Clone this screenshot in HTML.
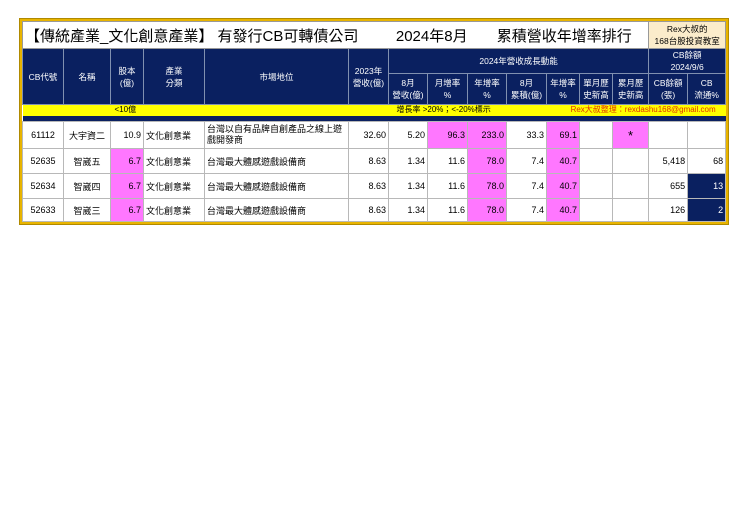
<!DOCTYPE html>
<html><head><meta charset="utf-8"><style>
body{margin:0;background:#fff;width:740px;height:523px;position:relative;font-family:"Liberation Sans","Noto Sans CJK TC",sans-serif;}
.wrap{position:absolute;left:20px;top:19px;border:2px solid #e8b400;box-shadow:0 0 0 1px #b08a00;}
table{border-collapse:collapse;table-layout:fixed;width:703px;}
td{padding:0 2px;font-size:8.5px;overflow:hidden;white-space:nowrap;box-sizing:border-box;}
.h td{background:#0a2060;color:#fff;text-align:center;border:1px solid #8090b0;line-height:12px}
.d td{background:#fff;color:#000;border:1px solid #b8b8b8;text-align:right;font-size:9px}
.d td.c{text-align:center}.d td.l{text-align:left}
.p{background:#ff77ff!important}
.n{background:#0a2060!important;color:#fff!important}
.y td{font-size:8px;line-height:10px;padding:0}
</style></head><body>
<div class="wrap"><table>
<colgroup><col style="width:41px"><col style="width:47px"><col style="width:33px"><col style="width:61px"><col style="width:144px"><col style="width:40px"><col style="width:39px"><col style="width:40px"><col style="width:39px"><col style="width:40px"><col style="width:33px"><col style="width:33px"><col style="width:36px"><col style="width:39px"><col style="width:38px"></colgroup>
<tr style="height:27px"><td colspan="13" style="font-size:15px;background:#fff;border:1px solid #999;padding-left:2px">【傳統產業_文化創意產業】 有發行CB可轉債公司 &nbsp; &nbsp; &nbsp; &nbsp; 2024年8月 &nbsp; &nbsp; &nbsp; 累積營收年增率排行</td><td colspan="2" style="background:#fbeccb;text-align:center;font-size:8.5px;line-height:12px;border:1px solid #999">Rex大叔的<br>168台股投資教室</td></tr>
<tr class="h" style="height:22px"><td rowspan="2">CB代號</td><td rowspan="2">名稱</td><td rowspan="2">股本<br>(億)</td><td rowspan="2">產業<br>分類</td><td rowspan="2">市場地位</td><td rowspan="2">2023年<br>營收(億)</td><td colspan="7">2024年營收成長動能</td><td colspan="2">CB餘額<br>2024/9/6</td></tr>
<tr class="h" style="height:31px"><td>8月<br>營收(億)</td><td>月增率<br>%</td><td>年增率<br>%</td><td>8月<br>累積(億)</td><td>年增率<br>%</td><td>單月歷<br>史新高</td><td>累月歷<br>史新高</td><td>CB餘額<br>(張)</td><td>CB<br>流通%</td></tr>
<tr class="y" style="height:11px;background:#ffff00"><td colspan="2"></td><td colspan="4" style="padding-left:4px">&lt;10億</td><td colspan="4" style="padding-left:8px">增長率 &gt;20%；&lt;-20%標示</td><td colspan="5" style="color:#e03000;text-align:right;padding-right:10px">Rex大叔整理：rexdashu168@gmail.com</td></tr>
<tr style="height:6px;background:#0a2060"><td colspan="15"></td></tr>
<tr class="d" style="height:27px"><td class="c">61112</td><td class="c">大宇資二</td><td>10.9</td><td class="l">文化創意業</td><td class="l" style="white-space:normal;line-height:11px">台灣以自有品牌自創產品之線上遊戲開發商</td><td>32.60</td><td>5.20</td><td class="p">96.3</td><td class="p">233.0</td><td>33.3</td><td class="p">69.1</td><td></td><td class="p c" style="font-size:13px">*</td><td></td><td></td></tr>
<tr class="d" style="height:25px"><td class="c">52635</td><td class="c">智崴五</td><td class="p">6.7</td><td class="l">文化創意業</td><td class="l">台灣最大體感遊戲設備商</td><td>8.63</td><td>1.34</td><td>11.6</td><td class="p">78.0</td><td>7.4</td><td class="p">40.7</td><td></td><td></td><td>5,418</td><td>68</td></tr>
<tr class="d" style="height:25px"><td class="c">52634</td><td class="c">智崴四</td><td class="p">6.7</td><td class="l">文化創意業</td><td class="l">台灣最大體感遊戲設備商</td><td>8.63</td><td>1.34</td><td>11.6</td><td class="p">78.0</td><td>7.4</td><td class="p">40.7</td><td></td><td></td><td>655</td><td class="n">13</td></tr>
<tr class="d" style="height:23px"><td class="c">52633</td><td class="c">智崴三</td><td class="p">6.7</td><td class="l">文化創意業</td><td class="l">台灣最大體感遊戲設備商</td><td>8.63</td><td>1.34</td><td>11.6</td><td class="p">78.0</td><td>7.4</td><td class="p">40.7</td><td></td><td></td><td>126</td><td class="n">2</td></tr>
</table></div>
</body></html>
